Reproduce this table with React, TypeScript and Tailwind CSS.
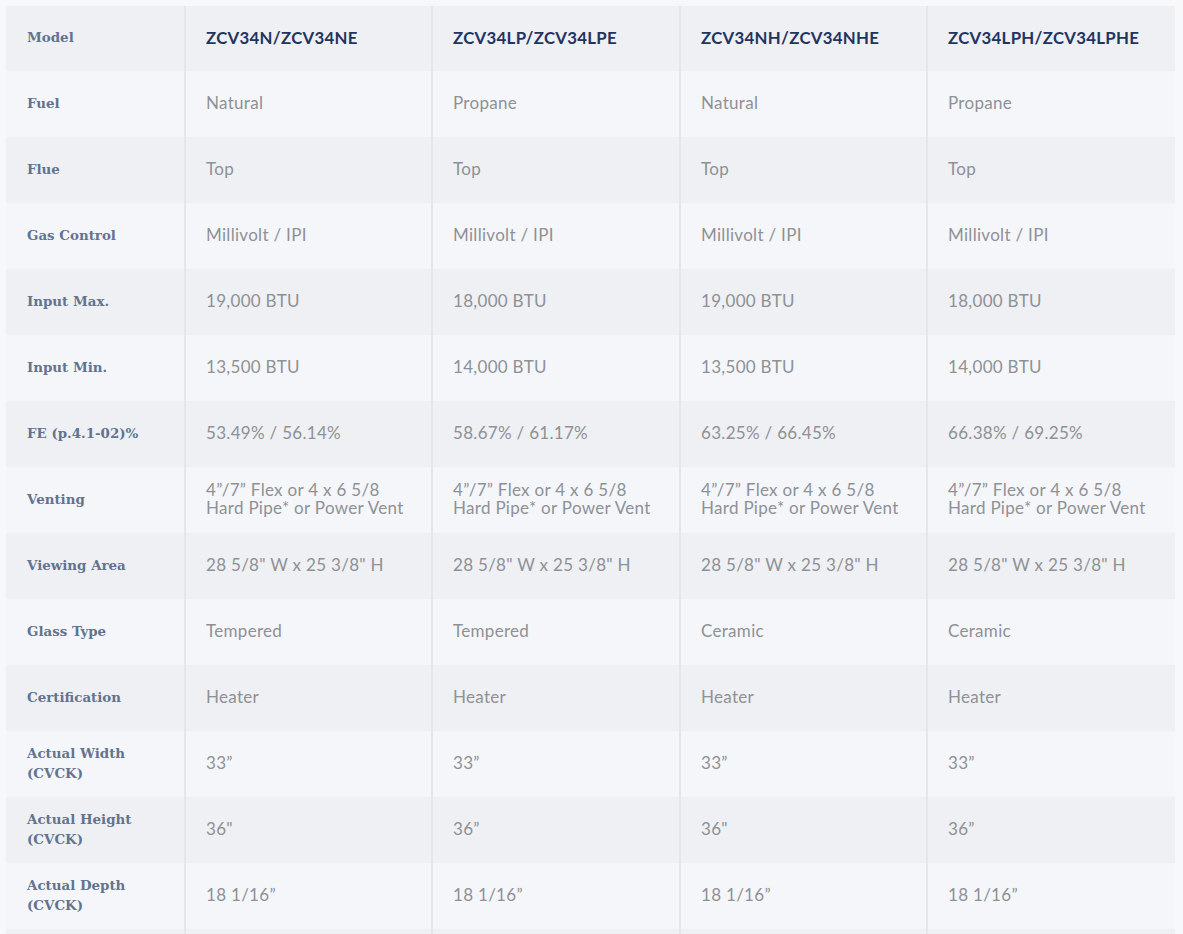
import React from "react";

const models = ["ZCV34N/ZCV34NE", "ZCV34LP/ZCV34LPE", "ZCV34NH/ZCV34NHE", "ZCV34LPH/ZCV34LPHE"];

const rows: [string, string[]][] = [
  ["Fuel", ["Natural", "Propane", "Natural", "Propane"]],
  ["Flue", ["Top", "Top", "Top", "Top"]],
  ["Gas Control", ["Millivolt / IPI", "Millivolt / IPI", "Millivolt / IPI", "Millivolt / IPI"]],
  ["Input Max.", ["19,000 BTU", "18,000 BTU", "19,000 BTU", "18,000 BTU"]],
  ["Input Min.", ["13,500 BTU", "14,000 BTU", "13,500 BTU", "14,000 BTU"]],
  ["FE (p.4.1-02)%", ["53.49% / 56.14%", "58.67% / 61.17%", "63.25% / 66.45%", "66.38% / 69.25%"]],
  [
    "Venting",
    [
      "4\u201d/7\u201d Flex or 4 x 6 5/8\nHard Pipe* or Power Vent",
      "4\u201d/7\u201d Flex or 4 x 6 5/8\nHard Pipe* or Power Vent",
      "4\u201d/7\u201d Flex or 4 x 6 5/8\nHard Pipe* or Power Vent",
      "4\u201d/7\u201d Flex or 4 x 6 5/8\nHard Pipe* or Power Vent",
    ],
  ],
  ["Viewing Area", ['28 5/8" W x 25 3/8" H', '28 5/8" W x 25 3/8" H', '28 5/8" W x 25 3/8" H', '28 5/8" W x 25 3/8" H']],
  ["Glass Type", ["Tempered", "Tempered", "Ceramic", "Ceramic"]],
  ["Certification", ["Heater", "Heater", "Heater", "Heater"]],
  ["Actual Width\n(CVCK)", ["33\u201d", "33\u201d", "33\u201d", "33\u201d"]],
  ["Actual Height\n(CVCK)", ['36"', "36\u201d", '36"', "36\u201d"]],
  ["Actual Depth\n(CVCK)", ["18 1/16\u201d", "18 1/16\u201d", "18 1/16\u201d", "18 1/16\u201d"]],
];

const widths = ["w-[247px]", "w-[248px]", "w-[247px]", "w-[249px]"];

function Label({ text }: { text: string }) {
  return (
    <div className="w-[178px] shrink-0 pl-[21px] pr-2 pb-[3px] flex items-center">
      <span
        className="whitespace-pre-line text-[13.4px] leading-[20px] font-bold text-[#63738f]"
        style={{ fontFamily: '"DejaVu Serif", "Liberation Serif", serif' }}
      >
        {text}
      </span>
    </div>
  );
}

export default function App() {
  return (
    <div className="h-[934px] w-[1183px] overflow-hidden bg-[#f8f8fb] pt-[6px] pl-[6px]">
      <div className="w-[1169px]">
        <div className="flex h-[65px] bg-[#eef0f3]">
          <Label text="Model" />
          {models.map((m, i) => (
            <div key={m} className={`${widths[i]} shrink-0 border-l-2 border-[#e4e6ea] pl-[20px] pb-[2px] flex items-center`}>
              <span
                className="text-[16.8px] font-bold text-[#1f3461] tracking-[0.3px]"
                style={{ fontFamily: 'Lato, "Open Sans", sans-serif' }}
              >
                {m}
              </span>
            </div>
          ))}
        </div>
        {rows.map(([label, vals], r) => (
          <div key={label} className={`flex h-[66px] ${r % 2 === 0 ? "bg-[#f5f6f9]" : "bg-[#eef0f3]"}`}>
            <Label text={label} />
            {vals.map((v, i) => (
              <div key={i} className={`${widths[i]} shrink-0 border-l-2 border-[#e4e6ea] pl-[20px] pb-[2px] flex items-center`}>
                <span
                  className="whitespace-pre-line text-[17px] leading-[18px] tracking-[0.3px] text-[#8e9196]"
                  style={{ fontFamily: 'Lato, "Open Sans", sans-serif' }}
                >
                  {v}
                </span>
              </div>
            ))}
          </div>
        ))}
        <div className="flex h-[66px] bg-[#eef0f3]">
          <div className="w-[178px] shrink-0" />
          {widths.map((w, i) => (
            <div key={i} className={`${w} shrink-0 border-l-2 border-[#e4e6ea]`} />
          ))}
        </div>
      </div>
    </div>
  );
}
